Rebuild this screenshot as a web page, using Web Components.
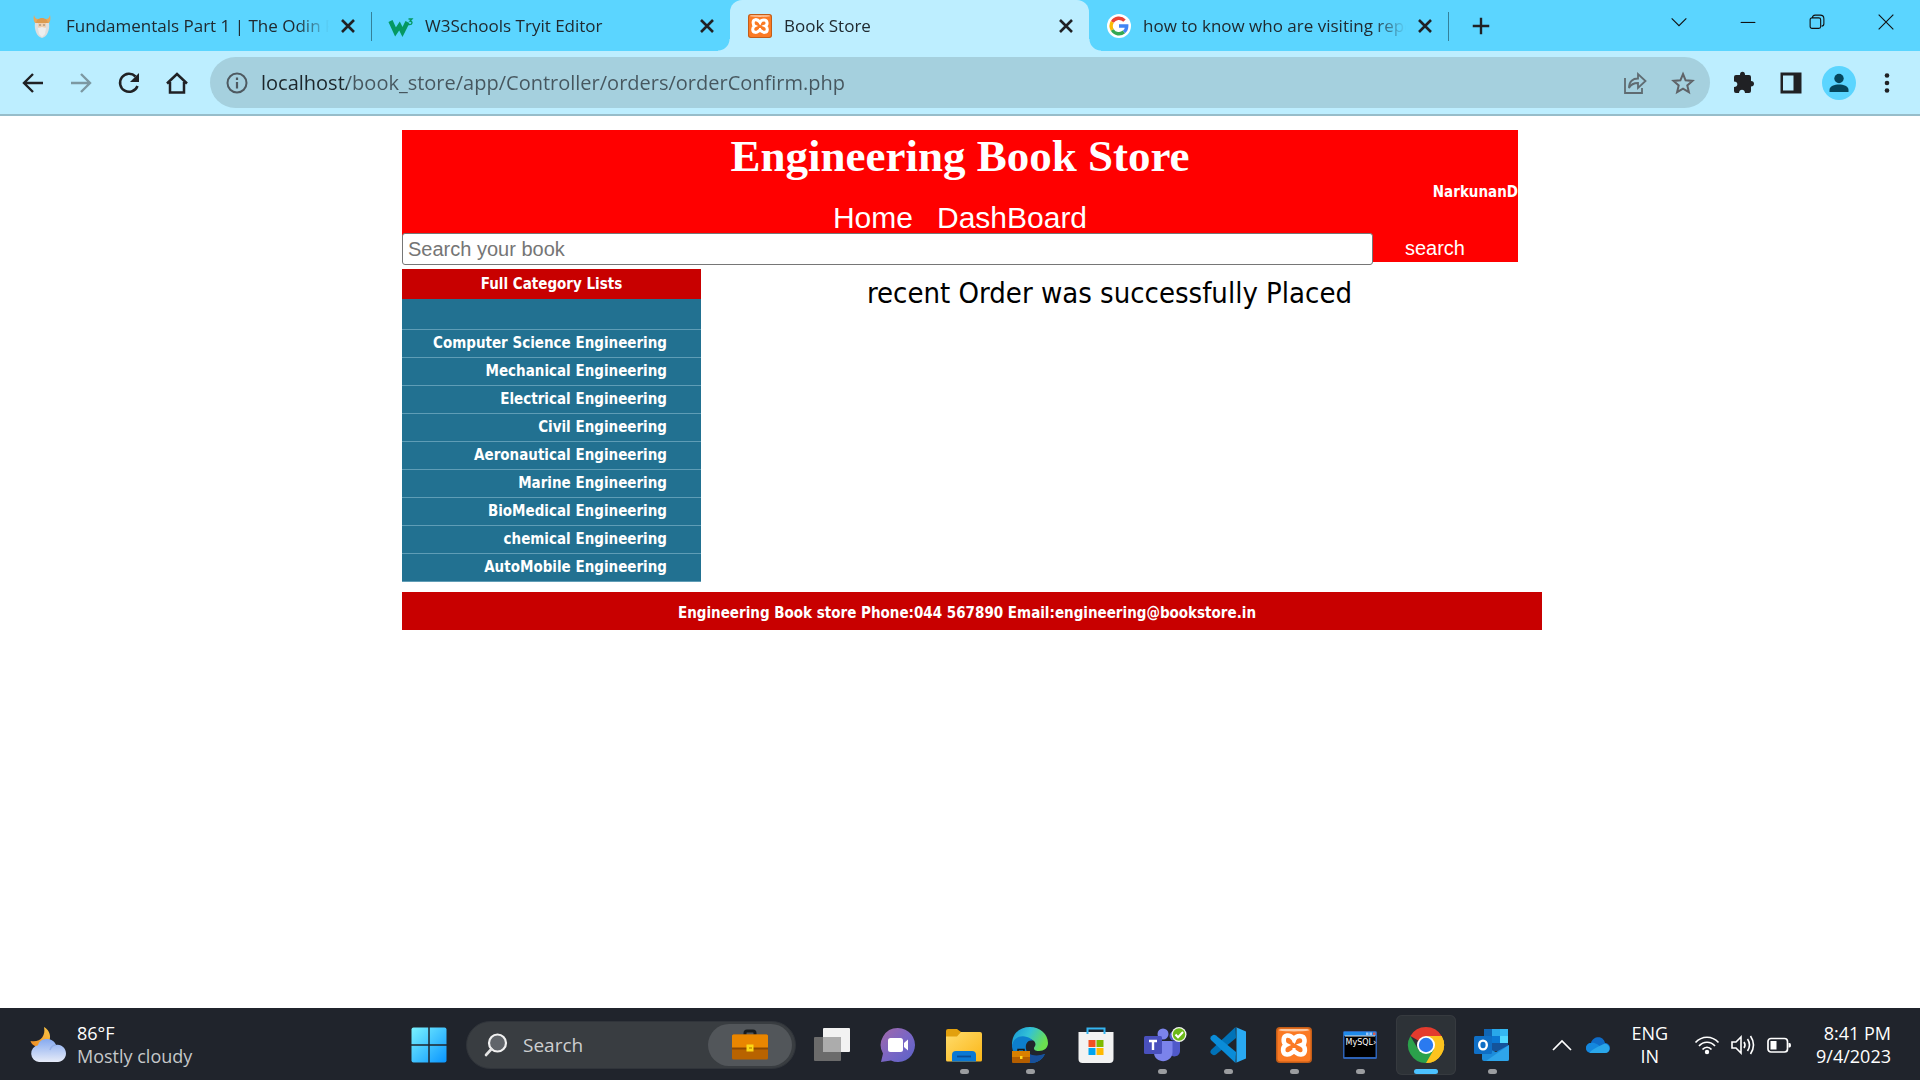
<!DOCTYPE html>
<html lang="en">
<head>
<meta charset="utf-8">
<meta name="viewport" content="width=device-width, initial-scale=1">
<title>Book Store</title>
<style>
  html, body { margin: 0; height: 100%; background: #fff; }
  body { font-family: "Open Sans", "Noto Sans", sans-serif; }
</style>
</head>
<body>
<desktop-screen>
  <tab-strip slot="top">
    <browser-tab icon="odin">Fundamentals Part 1 | The Odin Project</browser-tab>
    <browser-tab icon="w3" edge>W3Schools Tryit Editor</browser-tab>
    <browser-tab icon="xampp" active>Book Store</browser-tab>
    <browser-tab icon="google">how to know who are visiting repository</browser-tab>
  </tab-strip>
  <address-bar slot="top" url="localhost/book_store/app/Controller/orders/orderConfirm.php"></address-bar>

  <store-page>
    <store-header slot="header" user="NarkunanD">Engineering Book Store</store-header>
    <category-list slot="side" heading="Full Category Lists">
      <category-link>Computer Science Engineering</category-link>
      <category-link>Mechanical Engineering</category-link>
      <category-link>Electrical Engineering</category-link>
      <category-link>Civil Engineering</category-link>
      <category-link>Aeronautical Engineering</category-link>
      <category-link>Marine Engineering</category-link>
      <category-link>BioMedical Engineering</category-link>
      <category-link>chemical Engineering</category-link>
      <category-link>AutoMobile Engineering</category-link>
    </category-list>
    <order-message>recent Order was successfully Placed</order-message>
    <store-footer slot="footer">Engineering Book store Phone:044 567890 Email:engineering@bookstore.in</store-footer>
  </store-page>

  <task-bar slot="bottom">
    <task-button icon="taskview" label="Task view"></task-button>
    <task-button icon="chat" label="Chat"></task-button>
    <task-button icon="folder" label="File Explorer" open></task-button>
    <task-button icon="edge" label="Edge" open></task-button>
    <task-button icon="store" label="Store"></task-button>
    <task-button icon="teams" label="Teams" open></task-button>
    <task-button icon="code" label="Code" open></task-button>
    <task-button icon="xampp" label="XAMPP" open></task-button>
    <task-button icon="mysql" label="MySQL" open></task-button>
    <task-button icon="chrome" label="Chrome" open active></task-button>
    <task-button icon="outlook" label="Outlook" open></task-button>
  </task-bar>
</desktop-screen>

<script>
const ICONS = {
  odin: `<svg viewBox="0 0 24 24"><path d="M4 1c1 3 2 4 4 4h8c2 0 3-1 4-4 1 5 0 8-3 9H7C4 9 3 6 4 1z" fill="#e9a95c"/><path d="M6 10c0-8 12-8 12 0z" fill="#dc9b50"/><path d="M5 9h14c1 7-2 14-7 15-5-1-8-8-7-15z" fill="#dedede"/><path d="M8 9h8v4l-4 3-4-3z" fill="#f0cfae"/><path d="M9.500 11h1M13.500 11h1" stroke="#333" stroke-width="1"/><path d="M8 14l4-1 4 1-1 6-3 3-3-3z" fill="#eee"/></svg>`,
  w3: `<svg viewBox="0 0 24 24"><path d="M1.500 7l5 11 4-6 3 6 5-10" fill="none" stroke="#059862" stroke-width="4.500"/><path d="M19.500 5h3.500l-2 2.200c3 0 2.500 3.500-.5 3.500-1 0-1.500-.5-2-1" fill="none" stroke="#059862" stroke-width="1.300"/></svg>`,
  xampp: `<svg viewBox="0 0 36 36"><rect width="36" height="36" rx="4" fill="#c35d18"/><rect x="1.500" y="1.500" width="33" height="33" rx="3" fill="#fb7a24"/><path d="M3 3.500q0-1.500 2-1.500h26q2 0 2 1.500c-8 1.200-22 1.200-30 0z" fill="#fbc9a4"/><path d="M18 12.500C20 8 28 7.500 28.500 13c.3 3-1 4.500-2.500 5 4 2 4 9-1 9.500-4 .3-5-3-7-3s-3 3.300-7 3c-5-.5-5-7.500-1-9.500-3-1.500-3.500-9 1-9.500 4-.5 5 1.500 7 4z" fill="#fb7a24" stroke="#fff" stroke-width="4.600"/><path d="M18 12.500v3M18 21v4" stroke="#fff" stroke-width="3"/></svg>`,
  google: `<svg viewBox="0 0 24 24"><circle cx="12" cy="12" r="12" fill="#fff"/><g fill="none" stroke-width="3.400"><path d="M5.300 8A7.700 7.700 0 0 1 17.500 6.600" stroke="#ea4335"/><path d="M5.300 16A7.700 7.700 0 0 1 5.300 8" stroke="#fbbc05"/><path d="M17 17.900A7.700 7.700 0 0 1 5.300 16" stroke="#34a853"/><path d="M12 12h7.700c0 2.500-1 4.600-2.700 5.900" stroke="#4285f4"/></g></svg>`,
  close: `<svg viewBox="0 0 24 24"><path d="M6 6l12 12M18 6L6 18" stroke="#202124" stroke-width="2.600"/></svg>`,
  plus: `<svg viewBox="0 0 24 24"><path d="M12 3v18M3 12h18" stroke="#202124" stroke-width="2.600"/></svg>`,
  down: `<svg viewBox="0 0 24 24"><path d="M4 8l8 8 8-8" fill="none" stroke="#111" stroke-width="1.200"/></svg>`,
  min: `<svg viewBox="0 0 24 24"><path d="M4 12.500h16" stroke="#111" stroke-width="1.200"/></svg>`,
  restore: `<svg viewBox="0 0 24 24"><rect x="4.500" y="7.500" width="11.500" height="11.500" rx="2" fill="none" stroke="#111" stroke-width="1.200"/><path d="M7 7.500c0-2 1-3 3-3h5.500c3 0 4 1.500 4 4V14c0 1.500-1 2.500-2.500 2.500" fill="none" stroke="#111" stroke-width="1.200"/></svg>`,
  quit: `<svg viewBox="0 0 24 24"><path d="M4 4l16 16M20 4L4 20" stroke="#111" stroke-width="1.200"/></svg>`,
  back: `<svg viewBox="0 0 24 24"><path d="M22 12H3.500M12 3l-9 9 9 9" fill="none" stroke="#202124" stroke-width="2.400"/></svg>`,
  forward: `<svg viewBox="0 0 24 24"><path d="M2 12h18.500M12 3l9 9-9 9" fill="none" stroke="#7c98a2" stroke-width="2.400"/></svg>`,
  reload: `<svg viewBox="0 0 24 24"><path d="M20.500 15A9 9 0 1 1 18.500 5.500" fill="none" stroke="#202124" stroke-width="2.500"/><path d="M22 2v9h-9z" fill="#202124"/></svg>`,
  home: `<svg viewBox="0 0 24 24"><path d="M2 12.500L12 3l10 9.500M5 11v10.500h14V11" fill="none" stroke="#202124" stroke-width="2.500"/></svg>`,
  info: `<svg viewBox="0 0 24 24"><circle cx="12" cy="12" r="9.500" fill="none" stroke="#4e5960" stroke-width="2"/><path d="M12 11v6.500M12 6.500v2.500" stroke="#4e5960" stroke-width="2.200"/></svg>`,
  share: `<svg viewBox="0 0 24 24"><path d="M2 7v15h17v-5" fill="none" stroke="#5f6b71" stroke-width="1.800"/><path d="M6 17c0-7 4-9.500 9-9.500V3l7.500 7-7.500 7v-5c-4 0-7 1-9 5z" fill="none" stroke="#5f6b71" stroke-width="1.800"/></svg>`,
  star: `<svg viewBox="0 0 24 24"><path d="M12 3l2.600 6.300 6.900.6-5.200 4.500 1.600 6.800-5.900-3.600-5.900 3.600 1.600-6.800L2.500 9.900l6.900-.6z" fill="none" stroke="#5f6368" stroke-width="2"/></svg>`,
  puzzle: `<svg viewBox="0 0 24 24"><path d="M3 6q0-2 2-2h4c-.5-4.500 5.500-4.500 5 0h4q2 0 2 2v4c4 0 4 5.500 0 5.500V20q0 2-2 2h-4c0-4.500-6-4.500-6 0H5q-2 0-2-2v-4c4.500 0 4.500-5.500 0-5.500z" fill="#202124"/></svg>`,
  panel: `<svg viewBox="0 0 24 24"><path d="M1.500 1.500h21v21h-21z" fill="#202124"/><path d="M4 4.500h10.500v15H4z" fill="#bdeeff"/></svg>`,
  avatar: `<svg viewBox="0 0 34 34"><circle cx="17" cy="17" r="17" fill="#5bd5ff"/><circle cx="17" cy="12.500" r="4.700" fill="#05465c"/><path d="M7.500 26v-2c0-4 5-5.500 9.500-5.500s9.500 1.500 9.500 5.500v2z" fill="#05465c"/></svg>`,
  dots: `<svg viewBox="0 0 24 24" fill="#202124"><circle cx="12" cy="4.500" r="2.300"/><circle cx="12" cy="12" r="2.300"/><circle cx="12" cy="19.500" r="2.300"/></svg>`,
  weather: `<svg viewBox="0 0 36 36"><defs><linearGradient id="m" x1="0" y1="1" x2="1" y2="0"><stop stop-color="#ee8a22"/><stop offset="1" stop-color="#f8c646"/></linearGradient><linearGradient id="c" x1="0" y1="0" x2="0" y2="1"><stop stop-color="#86aaf0"/><stop offset="1" stop-color="#e6ebf8"/></linearGradient></defs><path d="M14 0c9 5 8 18-3 20C5 20 2 18 .5 14 10 16 16 9 14 0z" fill="url(#m)"/><path d="M9 35a8.500 8.500 0 0 1-1-16.800C10 10 23 10 26 18c6-1 10 4 10 8.500S32 35 28 35z" fill="url(#c)"/><path d="M26 18c-3 0-5 2-6 5" stroke="#86a3e2" stroke-width="1.500" fill="none" opacity=".6"/></svg>`,
  start: `<svg viewBox="0 0 36 36"><defs><linearGradient id="w" x1="0" y1="0" x2="1" y2="1" ><stop stop-color="#7af3ff"/><stop offset="1" stop-color="#0995ff"/></linearGradient><mask id="k"><path d="M0 0h36v36H0z" fill="#fff"/><path d="M18 0v36M0 18h36" stroke="#000" stroke-width="1.500"/></mask></defs><rect x=".5" y=".5" width="35" height="35" rx="2" fill="url(#w)" mask="url(#k)"/></svg>`,
  magnifier: `<svg viewBox="0 0 24 24"><circle cx="13.500" cy="10" r="8.500" fill="#61656a" stroke="#f1f1f1" stroke-width="2.200"/><path d="M7.500 16L2 22" stroke="#e4e4e4" stroke-width="2.600" stroke-linecap="round"/></svg>`,
  briefcase: `<svg viewBox="0 0 36 30"><path d="M13 5V3q0-2 2-2h6q2 0 2 2v2" fill="none" stroke="#171a1d" stroke-width="3"/><rect y="4.500" width="36" height="25" rx="1.500" fill="#b86300"/><path d="M0 6q0-1.500 1.500-1.500h33Q36 4.500 36 6v12H0z" fill="#e98600"/><path d="M0 17.500h36v2H0z" fill="#8c4800"/><rect x="14.500" y="14.500" width="7" height="7" fill="#fbd816"/><path d="M17 18h3" stroke="#c79000" stroke-width="1.500"/></svg>`,
  taskview: `<svg viewBox="0 0 36 36"><rect x="9" y="1" width="27" height="24" rx="1" fill="#f2f2f2"/><rect x="0" y="10" width="27" height="24" rx="1" fill="#6b6b6b"/><path d="M9 10h18v15H9z" fill="#acacac"/></svg>`,
  chat: `<svg viewBox="0 0 36 36"><defs><linearGradient id="t" x1="0" y1="0" x2="1" y2="1"><stop stop-color="#a268a8"/><stop offset=".5" stop-color="#7b66c4"/><stop offset="1" stop-color="#5a62c8"/></linearGradient></defs><path d="M18 1a17 17 0 1 1-7 32.500L1 35l2-8.500A17 17 0 0 1 18 1z" fill="url(#t)"/><rect x="8" y="11" width="15" height="14" rx="2.500" fill="#fff"/><path d="M24 16l4-3.500v11L24 20z" fill="#fff"/></svg>`,
  folder: `<svg viewBox="0 0 36 36"><defs><linearGradient id="f" x1="0" y1="0" x2="1" y2="1"><stop stop-color="#ffdc6c"/><stop offset="1" stop-color="#fbb617"/></linearGradient></defs><path d="M0 4q0-2 2-2h9l4 3v8H0z" fill="#e2a00d"/><path d="M0 9.500h11l4-4.500h19q2 0 2 2v26q0 1.500-1.500 1.500h-33Q0 34.500 0 33z" fill="url(#f)"/><path d="M6 34.500V28q0-4 4-4h16q4 0 4 4v6.500z" fill="#0a78d4"/><path d="M11 29.500h14" stroke="#0a4c94" stroke-width="1.800"/></svg>`,
  edge: `<svg viewBox="0 0 36 36"><defs><linearGradient id="e" x1="0" y1="0" x2="1" y2=".4"><stop stop-color="#1594d8"/><stop offset=".5" stop-color="#33c2d6"/><stop offset="1" stop-color="#6be04f"/></linearGradient></defs><path d="M0 18C0 6 8 0 18 0s18 7 18 16c0 5-4 8-9 8-4 0-5-1-5-3 0-1 1.500-1.500 1.500-4C23 13 19 12 15 12 8 12 2 14 0 21z" fill="url(#e)"/><path d="M0 18c2-8 9-10 15-8 3 1 5 2 6 4-5-2-8 3-7 8 1 6 7 8 13 7l6-2c-3 6-8 9-15 9C8 36 0 28 0 18z" fill="#0d7fcd"/><path d="M14 22c1 6 9 8 19 5-3 6-8 9-15 9z" fill="#174f9a"/><rect y="24" width="18" height="12" rx="1" fill="#b45e00"/><path d="M0 24h18v6H0z" fill="#d98000"/><path d="M6 24v-1.500h6V24" fill="none" stroke="#171717" stroke-width="1.500"/><path d="M8 29h2.500v3H8z" fill="#ffd91c"/></svg>`,
  store: `<svg viewBox="0 0 36 36"><path d="M.5 5h35v27q0 4-4 4h-27q-4 0-4-4z" fill="#f2f2f2"/><path d="M9.500 7V1.500h17V7" fill="none" stroke="#34b5f1" stroke-width="2"/><path d="M10.500 13h7v7h-7z" fill="#f25022"/><path d="M18.500 13h7v7h-7z" fill="#7fba00"/><path d="M10.500 21h7v7h-7z" fill="#00a4ef"/><path d="M18.500 21h7v7h-7z" fill="#ffb900"/></svg>`,
  teams: `<svg viewBox="0 0 36 36"><circle cx="30" cy="9" r="4.500" fill="#5059c9"/><path d="M26 14h9q1 0 1 1v9c0 6-8 7-10 3z" fill="#5059c9"/><circle cx="19" cy="7" r="5.500" fill="#7b83eb"/><path d="M12 14h15q1.500 0 1.500 1.500V25c0 12-18 12-18.500 1z" fill="#7b83eb"/><rect x="0" y="9" width="18" height="18" rx="1.500" fill="#4950bd"/><path d="M5 14h8M9 14v9" stroke="#fff" stroke-width="2.400"/><circle cx="35" cy="7.500" r="7.500" fill="#f4f6f1"/><circle cx="35" cy="7.500" r="6.200" fill="#6cb91a"/><path d="M31.500 7.500l2.500 2.700L39 5" fill="none" stroke="#fff" stroke-width="2"/></svg>`,
  code: `<svg viewBox="0 0 36 36"><path d="M25.500 0L1 23q-1.500 2 0 3.500l2 1.500q1.500.5 3-.5L26 11z" fill="#0072b8"/><path d="M25.500 36L1 13q-1.500-2 0-3.500L3 8q1.500-.5 3 .5L26 25z" fill="#0a8cd8"/><path d="M25.500 0L36 4.500v27L25.500 36c1 0 1-1 1-2V2c0-1 0-2-1-2z" fill="#29a9f2"/></svg>`,
  mysql: `<svg viewBox="0 0 36 36"><rect x="1" y="4" width="34" height="28" rx="1.500" fill="#2d62b5"/><path d="M2 5h32v4H2z" fill="#1f8bea"/><path d="M24 5.500h2.500v2.500H24zM27.500 5.500H30v2.500h-2.500z" fill="#9dc8fa"/><path d="M31 5.500h2.500v2.500H31z" fill="#e05b4b"/><path d="M2.500 9h31v21h-31z" fill="#000"/><path d="M3 9h30" stroke="#ddd"/><text x="3.500" y="18" font-family="DejaVu Sans" font-size="8" fill="#fff">MySQL›</text></svg>`,
  chrome: `<svg viewBox="0 0 36 36"><path d="M18 18L2.400 9A18 18 0 0 1 33.600 9z" fill="#e33b2e"/><path d="M18 18L33.600 9A18 18 0 0 1 18 36z" fill="#fcc31e"/><path d="M18 9h15.600A18 18 0 0 1 18 36l8-13z" fill="#fcc31e"/><path d="M10.200 22.500L2.400 9A18 18 0 0 0 18 36l7.800-13.500z" fill="#2ba14b"/><circle cx="18" cy="18" r="9" fill="#fff"/><circle cx="18" cy="18" r="7.200" fill="#2a7af0"/></svg>`,
  outlook: `<svg viewBox="0 0 36 36"><path d="M10 2h24v20H10z" fill="#1066b5"/><path d="M18 2h8v7h-8z" fill="#28a8ea"/><path d="M26 2h8v7h-8z" fill="#35b8f1"/><path d="M26 9h8v7h-8z" fill="#50d9ff"/><path d="M18 9h8v7h-8z" fill="#0b78d3"/><path d="M18 16h16v8H18z" fill="#14539a"/><path d="M8 19l14 6 13-7v14q0 2-2 2H10q-2 0-2-2z" fill="#1c8cdb"/><path d="M35 18v14q0 2-2 2H12z" fill="#2ea5ea"/><rect y="9" width="18" height="18" rx="1.500" fill="#0f6fc6"/><ellipse cx="9" cy="18" rx="3.800" ry="4.400" fill="none" stroke="#fff" stroke-width="2.400"/></svg>`,
  up: `<svg viewBox="0 0 24 24"><path d="M3 17l9-9 9 9" fill="none" stroke="#fff" stroke-width="1.700"/></svg>`,
  cloud: `<svg viewBox="0 0 24 24"><path d="M5 20a5 5 0 0 1 0-10c2-7 12-8 14 0a5 5 0 0 1 0 10z" fill="#0f6cc8"/><path d="M5 20a5 5 0 0 1 0-10c4-1 6 1 13 6l-5 4z" fill="#1488de"/><path d="M4 20c-1-2 9-7 15-9.500 6 1 6 9.500 0 9.500z" fill="#2aa7ea"/></svg>`,
  wifi: `<svg viewBox="0 0 24 24"><g fill="none" stroke="#fff" stroke-width="1.700"><path d="M.5 9.500c6.500-7 16.500-7 23 0M4 13c4.500-5 11.500-5 16 0M7.500 16.500c2.500-3 6.500-3 9 0"/></g><circle cx="12" cy="19" r="2.200" fill="#fff"/></svg>`,
  sound: `<svg viewBox="0 0 24 24"><g fill="none" stroke="#fff" stroke-width="1.600"><path d="M1 9h4l5-5v16l-5-5H1z"/><path d="M13 9q2 3 0 6M16.500 6q4 6 0 12M19.500 3q6 9 0 18"/></g></svg>`,
  battery: `<svg viewBox="0 0 24 24"><rect x="1" y="5.500" width="19.500" height="13.500" rx="3" fill="none" stroke="#fff" stroke-width="1.700"/><path d="M3.500 8h6v8.500h-6zM21.500 10h1q1.500 0 1.500 2.300t-1.500 2.200h-1z" fill="#fff"/></svg>`
};
const RESET = `<style>
  :host, *, *::before, *::after { box-sizing: border-box; }
  button, input { font: inherit; color: inherit; margin: 0; padding: 0; border: 0; background: none; min-width: 0; }
  a { color: inherit; text-decoration: none; }
</style>`;

/* Registers an element whose shadow root is cloned from one template. */
function element(name, markup, setup) {
  const template = document.createElement("template");
  template.innerHTML = RESET + markup;
  customElements.define(name, class extends HTMLElement {
    constructor() {
      super();
      this.attachShadow({ mode: "open" }).append(template.content.cloneNode(true));
    }
    connectedCallback() { if (setup) setup(this, this.shadowRoot); }
  });
}

customElements.define("ui-icon", class extends HTMLElement {
  static observedAttributes = ["name"];
  attributeChangedCallback(attribute, before, name) {
    const root = this.shadowRoot || this.attachShadow({ mode: "open" });
    root.innerHTML = `<style>:host { display: inline-flex; flex: none; width: var(--size, 24px); height: var(--size, 24px); }
      svg { width: 100%; height: 100%; overflow: visible; }</style>` + (ICONS[name] || "<svg></svg>");
    root.querySelector("svg").setAttribute("aria-hidden", "true");
  }
});

element("desktop-screen", `<style>
  :host { display: flex; flex-direction: column; min-height: 100vh; }
  main { flex: 1; padding: 14px 0; }
</style><header><slot name="top"></slot></header><main><slot></slot></main><slot name="bottom"></slot>`);

element("tab-strip", `<style>
  :host { display: flex; align-items: center; justify-content: space-between; height: 51px; background: #5bd5ff; color: #202a30; font-size: 17px; }
  .tabs { display: flex; align-items: center; height: 100%; padding-left: 12px; min-width: 0; }
  .new { display: flex; margin-left: 22px; }
  .new ui-icon { --size: 22px; }
  .window { display: flex; align-self: flex-start; height: 43px; }
  .window button { width: 69px; display: flex; align-items: center; justify-content: center; }
  .window ui-icon { --size: 22px; }
</style>
<div class="tabs" role="tablist"><slot></slot><button class="new" aria-label="New tab"><ui-icon name="plus"></ui-icon></button></div>
<div class="window">
  <button aria-label="Search tabs"><ui-icon name="down"></ui-icon></button>
  <button aria-label="Minimize"><ui-icon name="min"></ui-icon></button>
  <button aria-label="Restore"><ui-icon name="restore"></ui-icon></button>
  <button aria-label="Close"><ui-icon name="quit"></ui-icon></button>
</div>`);

element("browser-tab", `<style>
  :host { position: relative; display: flex; align-items: center; width: 359px; height: 100%; padding: 0 11px 0 18px; }
  :host::after { content: ""; position: absolute; right: -1px; top: 12px; height: 29px; width: 1px; background: #34819a; }
  :host([edge])::after, :host([active])::after { display: none; }
  :host([active]) { background: #bdeeff; border-radius: 12px 12px 0 0; }
  .flare { display: none; }
  :host([active]) .flare { display: block; position: absolute; bottom: 0; width: 12px; height: 12px; }
  .flare.l { left: -12px; background: radial-gradient(circle at 0 0, #5bd5ff 11px, #bdeeff 12px); }
  .flare.r { right: -12px; background: radial-gradient(circle at 100% 0, #5bd5ff 11px, #bdeeff 12px); }
  .title { flex: 1; min-width: 0; margin: 0 7px 0 12px; overflow: hidden; white-space: nowrap; line-height: 24px;
    -webkit-mask-image: linear-gradient(90deg, #000 calc(100% - 32px), transparent); mask-image: linear-gradient(90deg, #000 calc(100% - 32px), transparent); }
  button { display: flex; }
</style>
<i class="flare l"></i><ui-icon></ui-icon><div class="title" role="tab"><slot></slot></div>
<button aria-label="Close tab"><ui-icon name="close"></ui-icon></button><i class="flare r"></i>`,
  (host, root) => root.querySelector("ui-icon").setAttribute("name", host.getAttribute("icon")));

element("address-bar", `<style>
  :host { display: flex; align-items: center; height: 65px; padding: 6px 21px 6px 21px; background: #bdeeff; border-bottom: 2px solid #97bdca; gap: 24px; }
  button { display: flex; flex: none; }
  label { flex: 1; display: flex; align-items: center; gap: 12px; height: 51px; padding: 0 15px; border-radius: 26px; background: #a5d0de; margin: 0 -3px 0 -3px; }
  input { flex: 1; font-size: 20px; line-height: 32px; height: 32px; outline: 0;
    background: linear-gradient(90deg, #1c262b 86px, #46565e 86px); -webkit-background-clip: text; background-clip: text; -webkit-text-fill-color: transparent; }
  .pad { margin-right: 12px; }
  .avatar ui-icon { --size: 34px; }
  .avatar { margin: 0 -5px; }
</style>
<button aria-label="Back"><ui-icon name="back"></ui-icon></button>
<button aria-label="Forward"><ui-icon name="forward"></ui-icon></button>
<button aria-label="Reload"><ui-icon name="reload"></ui-icon></button>
<button aria-label="Home"><ui-icon name="home"></ui-icon></button>
<label><ui-icon name="info"></ui-icon><input aria-label="Address" type="text">
<button class="pad" aria-label="Share"><ui-icon name="share"></ui-icon></button><button aria-label="Bookmark"><ui-icon name="star"></ui-icon></button></label>
<button aria-label="Extensions"><ui-icon name="puzzle"></ui-icon></button>
<button aria-label="Side panel"><ui-icon name="panel"></ui-icon></button>
<button class="avatar" aria-label="Profile"><ui-icon name="avatar"></ui-icon></button>
<button aria-label="Menu"><ui-icon name="dots"></ui-icon></button>`,
  (host, root) => root.querySelector("input").value = host.getAttribute("url"));

element("store-page", `<style>
  :host { display: block; width: 100%; max-width: 1116px; margin: 0 auto; font-family: "DejaVu Sans Condensed", "DejaVu Sans", sans-serif; }
  .columns { display: flex; align-items: flex-start; margin: 7px 0 10px; }
  .side { flex: 0 0 299px; }
  .content { flex: 1; }
</style><slot name="header"></slot><div class="columns"><div class="side"><slot name="side"></slot></div><div class="content"><slot></slot></div></div><slot name="footer"></slot>`);

element("store-header", `<style>
  :host { display: block; background: #f00; color: #fff; height: 132px; }
  h1 { margin: 0; padding-top: 1px; text-align: center; font: bold 45px/51px "Liberation Serif", serif; }
  .user { text-align: right; font-size: 15px; font-weight: bold; line-height: 20px; }
  nav { display: flex; justify-content: center; gap: 24px; font: 30px/31px "Liberation Sans", sans-serif; }
  form { display: flex; font: 20px/24px "Liberation Sans", sans-serif; }
  input { width: 87%; height: 32px; padding: 0 5px; background: #fff; color: #000; border: 1px solid #767676; border-radius: 3px; }
  input::placeholder { color: #757575; opacity: 1; }
  button { height: 30px; padding: 0 32px; }
</style>
<h1><slot></slot></h1><div class="user"></div>
<nav><a href="#home">Home</a><a href="#dashboard">DashBoard</a></nav>
<form><input type="text" placeholder="Search your book" aria-label="Search your book"><button type="button">search</button></form>`,
  (host, root) => root.querySelector(".user").textContent = host.getAttribute("user"));

element("category-list", `<style>
  :host { display: block; background: #227191; color: #fff; font-size: 15px; font-weight: bold; }
  h2 { margin: 0; height: 30px; font: inherit; line-height: 30px; text-align: center; background: #c80000; }
  .gap { height: 31px; border-bottom: 1px solid #5f9db6; }
</style><h2></h2><div class="gap"></div><nav><slot></slot></nav>`,
  (host, root) => root.querySelector("h2").textContent = host.getAttribute("heading"));

element("category-link", `<style>
  :host { display: block; height: 28px; padding-right: 34px; text-align: right; line-height: 27px; border-bottom: 1px solid #5f9db6; }
</style><a href="#category"><slot></slot></a>`);

element("order-message", `<style>
  :host { display: block; text-align: center; font-size: 29px; line-height: 48px; color: #000; }
</style><slot></slot>`);

element("store-footer", `<style>
  :host { display: block; width: calc(100% + 24px); height: 38px; padding-right: 10px; background: #c80000; color: #fff; text-align: center; font-size: 15px; font-weight: bold; line-height: 42px; }
</style><slot></slot>`);

element("task-button", `<style>
  :host { display: block; }
  button { position: relative; display: flex; align-items: center; justify-content: center; width: 60px; height: 60px; border-radius: 6px; }
  ui-icon { --size: 36px; }
  :host([active]) button { background: #2d3237; box-shadow: inset 0 0 0 1px #363a3f; }
  :host([open]) button::after { content: ""; position: absolute; bottom: 1px; width: 9px; height: 5px; border-radius: 3px; background: #9b9da0; }
  :host([active]) button::after { width: 24px; background: #4cc2ff; }
</style><button><ui-icon></ui-icon></button>`,
  (host, root) => {
    root.querySelector("ui-icon").setAttribute("name", host.getAttribute("icon"));
    root.querySelector("button").setAttribute("aria-label", host.getAttribute("label"));
  });

element("task-bar", `<style>
  :host { display: grid; grid-template-columns: 1fr auto 1fr; align-items: center; height: 72px; padding: 2px 29px 0 30px; background: #20242c; color: #fff; font-size: 18px; line-height: 23px; }
  .weather, .apps, .tray { display: flex; align-items: center; }
  .weather { gap: 11px; --size: 36px; text-align: left; justify-self: start; }
  .weather span { display: block; }
  .weather .sky { color: #c5c8ca; }
  .apps { gap: 6px; }
  .start { display: flex; padding: 0 6px 0 12px; --size: 36px; }
  .search { display: flex; align-items: center; width: 330px; height: 48px; padding: 0 3px 0 17px; border-radius: 24px; background: #393d41; border: 1px solid #30343a; margin: 0 0 0 7px; }
  .search input { flex: 1; margin-left: 15px; font-size: 19px; outline: 0; }
  .search input::placeholder { color: #cdcfd0; opacity: 1; }
  .hint { display: flex; align-items: center; justify-content: center; width: 84px; height: 42px; border-radius: 21px; background: #52565a; --size: 36px; }
  .tray { justify-self: end; }
  .tray button { display: flex; }
  .lang { text-align: center; margin: 0 27px 0 21px; }
  .tray .lang, .tray .clock { display: block; }
  .status { gap: 12px; margin-right: 25px; }
  .clock { text-align: right; }
  .drive { margin-left: 12px; }
</style>
<button class="weather"><ui-icon name="weather"></ui-icon><span><span>86°F</span><span class="sky">Mostly cloudy</span></span></button>
<div class="apps">
  <button class="start" aria-label="Start"><ui-icon name="start"></ui-icon></button>
  <label class="search"><ui-icon name="magnifier"></ui-icon><input type="text" placeholder="Search" aria-label="Search"><span class="hint"><ui-icon name="briefcase"></ui-icon></span></label>
  <slot></slot>
</div>
<div class="tray">
  <button aria-label="Hidden icons"><ui-icon name="up"></ui-icon></button>
  <button class="drive" aria-label="OneDrive"><ui-icon name="cloud"></ui-icon></button>
  <button class="lang">ENG<br>IN</button>
  <button class="status" aria-label="Network, sound, battery"><ui-icon name="wifi"></ui-icon><ui-icon name="sound"></ui-icon><ui-icon name="battery"></ui-icon></button>
  <button class="clock">8:41 PM<br>9/4/2023</button>
</div>`);
</script>
</body>
</html>
